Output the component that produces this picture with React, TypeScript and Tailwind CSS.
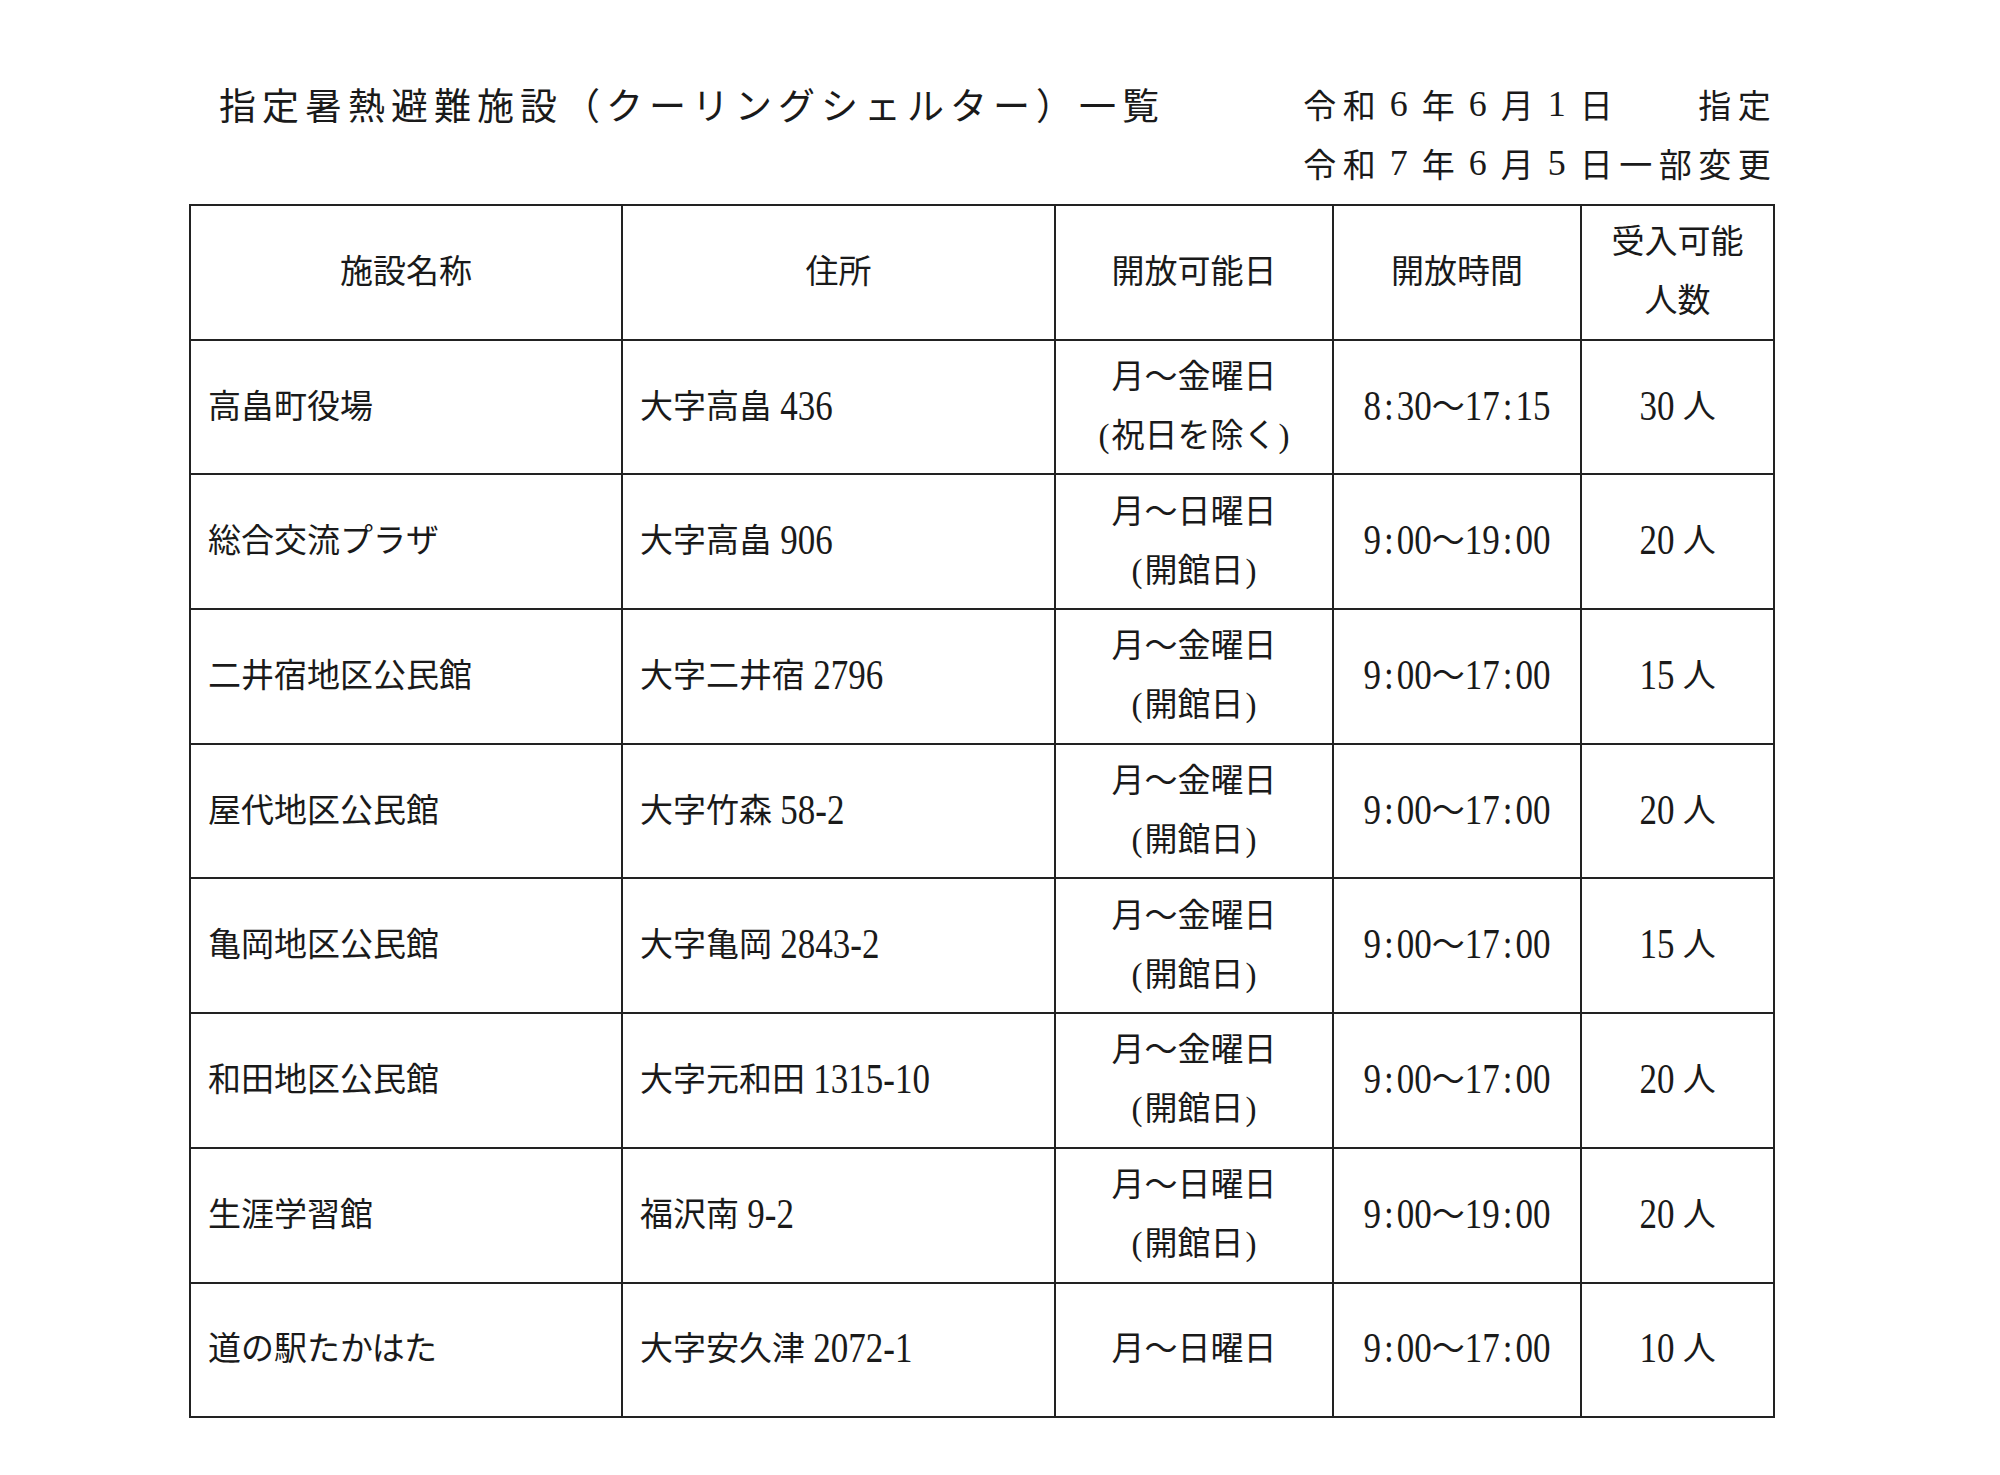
import React from "react";

type Row = [string, string, string[], string, string];

const rows: Row[] = [
  ["高畠町役場", "大字高畠 436", ["月～金曜日", "(祝日を除く)"], "8:30～17:15", "30 人"],
  ["総合交流プラザ", "大字高畠 906", ["月～日曜日", "(開館日)"], "9:00～19:00", "20 人"],
  ["二井宿地区公民館", "大字二井宿 2796", ["月～金曜日", "(開館日)"], "9:00～17:00", "15 人"],
  ["屋代地区公民館", "大字竹森 58-2", ["月～金曜日", "(開館日)"], "9:00～17:00", "20 人"],
  ["亀岡地区公民館", "大字亀岡 2843-2", ["月～金曜日", "(開館日)"], "9:00～17:00", "15 人"],
  ["和田地区公民館", "大字元和田 1315-10", ["月～金曜日", "(開館日)"], "9:00～17:00", "20 人"],
  ["生涯学習館", "福沢南 9-2", ["月～日曜日", "(開館日)"], "9:00～19:00", "20 人"],
  ["道の駅たかはた", "大字安久津 2072-1", ["月～日曜日"], "9:00～17:00", "10 人"],
];

function Txt({ text }: { text: string }) {
  const parts = text.split(/([0-9\-]+|:|\(|\))/).filter((p) => p.length > 0);
  return (
    <span>
      {parts.map((p, i) => {
        if (p === ":") {
          return (
            <span key={i} className="inline-block leading-none text-[35px] mx-[3px] scale-y-[1.2]">
              :
            </span>
          );
        }
        if (p === "(" || p === ")") {
          return (
            <span key={i} className="inline-block mx-[2px]">
              {p}
            </span>
          );
        }
        if (/^[0-9\-]+$/.test(p)) {
          return (
            <span key={i} className="inline-block leading-none text-[35px] scale-y-[1.2]">
              {p}
            </span>
          );
        }
        return <span key={i}>{p}</span>;
      })}
    </span>
  );
}

function DateLine({ chars }: { chars: string[] }) {
  return (
    <div className="flex leading-[59px]">
      {chars.map((c, i) => (
        <span
          key={i}
          className={
            /[0-9]/.test(c)
              ? "inline-block w-[39.5px] text-center font-['Liberation_Serif',serif] text-[36px]"
              : "inline-block w-[39.5px] text-center"
          }
        >
          {c === " " ? "\u00a0" : c}
        </span>
      ))}
    </div>
  );
}

function Cell({
  children,
  left,
}: {
  children: React.ReactNode;
  left?: boolean;
}) {
  return (
    <div
      className={
        left
          ? "border-r-2 border-b-2 border-[#222222] flex items-center justify-start pl-[17px]"
          : "border-r-2 border-b-2 border-[#222222] flex flex-col items-center justify-center"
      }
    >
      {children}
    </div>
  );
}

export default function App() {
  return (
    <div className="w-[2000px] min-h-[1475px] bg-white text-[#1a1a1a] pt-[72px] pl-[189px] font-['Noto_Sans_CJK_JP',sans-serif]">
      <div className="w-[1586px] h-[130px] flex justify-between">
        <div className="pl-[30px] text-[37px] leading-[65px] tracking-[6px]">
          指定暑熱避難施設（クーリングシェルター）一覧
        </div>
        <div className="flex flex-col items-end pt-[3px] text-[33px] mr-[1px]">
          <DateLine chars={["令", "和", "6", "年", "6", "月", "1", "日", " ", " ", "指", "定"]} />
          <DateLine chars={["令", "和", "7", "年", "6", "月", "5", "日", "一", "部", "変", "更"]} />
        </div>
      </div>
      <div className="mt-[2px] w-fit grid grid-cols-[432px_433px_278px_248px_193px] auto-rows-[134.7px] border-t-2 border-l-2 border-[#222222] text-[33px] leading-[59px] font-['Liberation_Serif','Noto_Sans_CJK_JP',serif]">
        <Cell>
          <span>施設名称</span>
        </Cell>
        <Cell>
          <span>住所</span>
        </Cell>
        <Cell>
          <span>開放可能日</span>
        </Cell>
        <Cell>
          <span>開放時間</span>
        </Cell>
        <Cell>
          <span>受入可能</span>
          <span>人数</span>
        </Cell>
        {rows.map((r, i) => (
          <React.Fragment key={i}>
            <Cell left>
              <Txt text={r[0]} />
            </Cell>
            <Cell left>
              <Txt text={r[1]} />
            </Cell>
            <Cell>
              {r[2].map((l, j) => (
                <Txt key={j} text={l} />
              ))}
            </Cell>
            <Cell>
              <Txt text={r[3]} />
            </Cell>
            <Cell>
              <Txt text={r[4]} />
            </Cell>
          </React.Fragment>
        ))}
      </div>
    </div>
  );
}
